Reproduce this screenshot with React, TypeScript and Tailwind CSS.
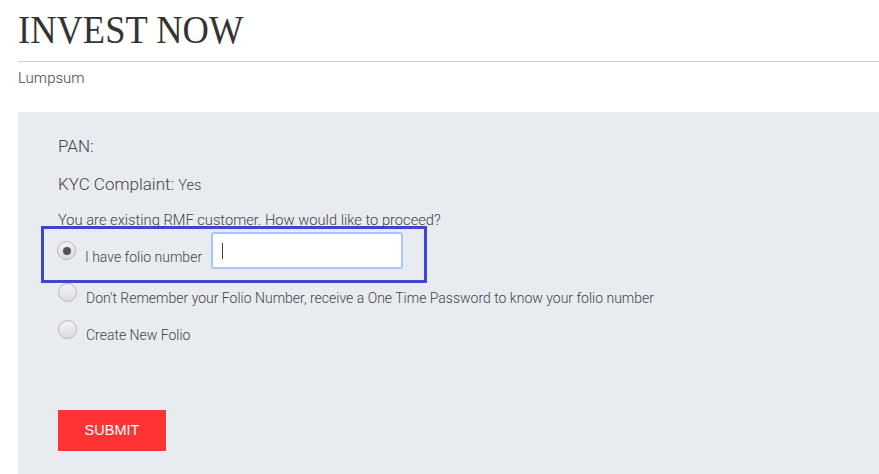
import React from "react";

function Radio({ checked }: { checked?: boolean }) {
  return (
    <span className="flex h-[19px] w-[19px] shrink-0 items-center justify-center rounded-full border border-[#b8b8b8] bg-gradient-to-b from-[#f4f4f4] to-[#dcdcdc]">
      {checked && <span className="h-[8px] w-[8px] rounded-full bg-[#555]" />}
    </span>
  );
}

export default function App() {
  return (
    <div className="min-h-[474px] w-full bg-white font-['Roboto',sans-serif] text-[#444]">
      <div className="pl-[18px]">
        <h1 className="origin-left scale-x-[0.89] pt-[7px] font-['Liberation_Serif',serif] text-[41px] leading-[44px] text-[#333]">
          INVEST NOW
        </h1>
        <div className="mt-[10px] h-px bg-[#c9ced5]" />
        <div className="mt-[6px] text-[15px] font-light leading-[20px] text-[#444]">Lumpsum</div>
        <div className="mt-[24px] min-h-[362px] bg-[#e8ebf0] pl-[40px] pt-[22px]">
          <div className="text-[17px] font-light leading-[24px]">PAN:</div>
          <div className="mt-[14px] text-[17px] font-light leading-[24px]">
            KYC Complaint: <span className="text-[14.5px]">Yes</span>
          </div>
          <div className="mt-[12px] text-[14.7px] font-light leading-[20px]">
            You are existing RMF customer. How would like to proceed?
          </div>
          <div className="-ml-[17px] mt-[-4px] flex h-[57px] w-[386px] items-start border-[3px] border-[#3e47cc] pl-[13px]">
            <div className="mt-[12px]">
              <Radio checked />
            </div>
            <span className="ml-[9px] mt-[18px] text-[14px] font-light leading-[20px]">I have folio number</span>
            <div className="ml-[9px] mt-[3px] flex h-[37px] w-[192px] items-center rounded-[3px] border-2 border-[#a6c6f7] bg-white pl-[9px]">
              <span className="h-[16px] w-px bg-[#444]" />
            </div>
          </div>
          <div className="flex items-start">
            <Radio />
            <span className="ml-[9px] mt-[5px] text-[14px] font-light leading-[20px]">
              Don't Remember your Folio Number, receive a One Time Password to know your folio number
            </span>
          </div>
          <div className="mt-[12px] flex items-start">
            <Radio />
            <span className="ml-[9px] mt-[5px] text-[14px] font-light leading-[20px]">Create New Folio</span>
          </div>
          <button className="mt-[65px] flex h-[41px] w-[108px] items-center justify-center bg-[#ff3333] font-['Liberation_Sans',sans-serif] text-[14.5px] text-white">
            SUBMIT
          </button>
        </div>
      </div>
    </div>
  );
}
